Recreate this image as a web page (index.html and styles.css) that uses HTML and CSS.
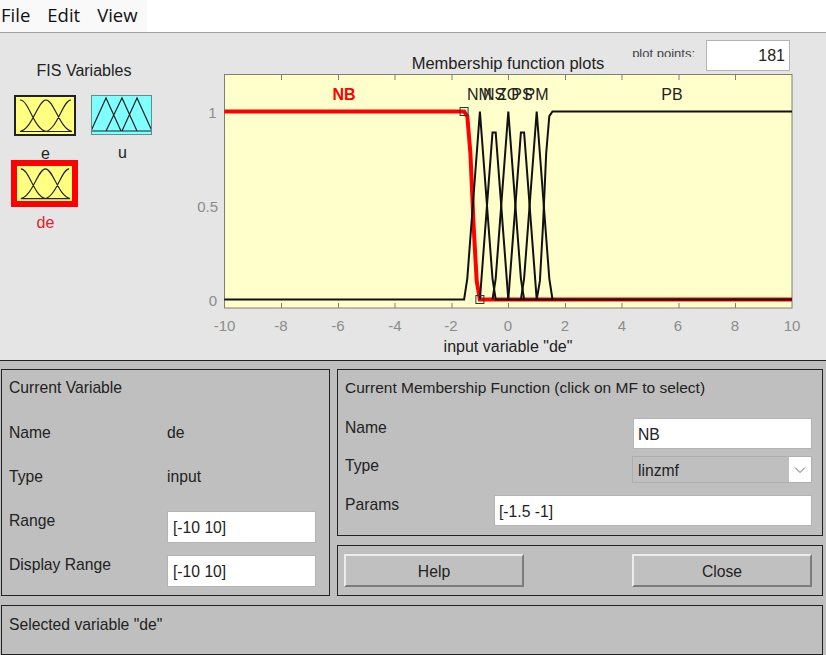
FILE: index.html
```html
<!DOCTYPE html>
<html lang="en">
<head>
  <meta charset="UTF-8">
  <title>Membership Function Editor</title>
  <link rel="stylesheet" href="styles.css">
</head>
<body>

  <header class="menubar">
    <nav class="menu">
      <a>File</a>
      <a>Edit</a>
      <a>View</a>
    </nav>
  </header>

  <svg class="defs" width="0" height="0">
    <symbol id="gauss" viewBox="0 0 58 37" preserveAspectRatio="none">
      <path d="M4 3C13 3 17 31 30 34.500M4 34.500C17 31 22 3 30 3C38 3 43 31 56 34.500M30 34.500C42 31 47 3 55 3M4 34.500H56" fill="none" stroke="#222" stroke-width="1.200"/>
    </symbol>
  </svg>

  <section class="top">
    <div class="fis">
      <div class="fis-title">FIS Variables</div>
      <div class="fis-grid">
        <div class="fis-cell">
          <svg class="var-icon var-input" width="62" height="41"><use href="#gauss" width="58" height="37"/></svg>
          <div class="var-name">e</div>
        </div>
        <div class="fis-cell">
          <svg class="var-icon var-output" width="61" height="40" viewBox="0 0 61 40">
            <path d="M0 36L15 3L30 36M15 36L31 3L46 36M31 36L46 3L61 36M0 36H61" fill="none" stroke="#222" stroke-width="1.200"/>
          </svg>
          <div class="var-name">u</div>
        </div>
        <div class="fis-cell">
          <svg class="var-icon var-selected" width="67" height="47"><use href="#gauss" width="55" height="35"/></svg>
          <div class="var-name var-name-selected">de</div>
        </div>
      </div>
    </div>

    <div class="plot">
      <div class="plot-head">
        <span></span>
        <div class="plot-title">Membership function plots</div>
        <div class="plot-points">
          <span class="points-label">plot points:</span>
          <input class="field points-field" type="text" value="181">
        </div>
      </div>

      <svg class="axes" width="636" height="286" viewBox="0 0 636 286">
        <rect x="34.500" y="0.500" width="567.500" height="233.500" fill="#ffffcc" stroke="#807f70"/>
        <path d="M91.500 1V6M148.500 1V6M205 1V6M262 1V6M318.500 1V6M375.500 1V6M432 1V6M489 1V6M545.500 1V6M91.500 234V229M148.500 234V229M205 234V229M262 234V229M318.500 234V229M375.500 234V229M432 234V229M489 234V229M545.500 234V229" stroke="#807f70" fill="none"/>

        <g class="y-labels">
          <text x="26.500" y="43.500">1</text>
          <text x="28" y="138">0.5</text>
          <text x="27" y="232">0</text>
        </g>
        <g class="x-labels">
          <text x="34.500" y="257">-10</text>
          <text x="91" y="257">-8</text>
          <text x="148" y="257">-6</text>
          <text x="205" y="257">-4</text>
          <text x="261" y="257">-2</text>
          <text x="318" y="257">0</text>
          <text x="375" y="257">2</text>
          <text x="432" y="257">4</text>
          <text x="488" y="257">6</text>
          <text x="545" y="257">8</text>
          <text x="602" y="257">10</text>
        </g>
        <text class="axis-label" x="318" y="278">input variable "de"</text>

        <g transform="translate(34.300 0.500)" fill="none">
          <!-- NB is selected so it sits under the others -->
          <polyline stroke="#f00" stroke-width="4" points="0,37 239.800,37 243,41.700 246.100,78.700 249.300,150.700 252.400,206.400 255.600,225 567.700,225"/>
          <g stroke="#111" stroke-width="2">
            <polyline points="0,225 239.800,225 243,204.100 255.600,37 268.200,204.100 271.400,225 567.700,225"/>
            <polyline points="255.600,225 268.200,57.900 271.400,57.900 284,225"/>
            <polyline points="268.200,225 271.400,204.100 284,37 296.600,204.100 299.800,225"/>
            <polyline points="284,225 296.600,57.900 299.800,57.900 312.400,225"/>
            <polyline points="296.600,225 299.800,204.100 312.400,37 325,204.100 328.200,225"/>
            <polyline points="312.400,225 315.600,206.400 318.700,150.700 321.900,78.700 325,41.700 328.200,37 567.700,37"/>
          </g>
          <rect class="handle" x="235.800" y="33" width="8" height="8"/>
          <rect class="handle" x="251.600" y="221" width="8" height="8"/>
        </g>

        <g class="mf-labels">
          <text class="mf-selected" x="154" y="25.500">NB</text>
          <text x="289.500" y="25.500">NM</text>
          <text x="304" y="25.500">NS</text>
          <text x="318" y="25.500">ZO</text>
          <text x="332" y="25.500">PS</text>
          <text x="346.500" y="25.500">PM</text>
          <text x="482" y="25.500">PB</text>
        </g>
      </svg>
    </div>
  </section>

  <main class="bottom">
    <div class="panel panel-var">
      <div class="var-title">Current Variable</div>
      <div>Name</div><div>de</div>
      <div>Type</div><div>input</div>
      <div>Range</div><input class="field" type="text" value="[-10 10]">
      <div>Display Range</div><input class="field" type="text" value="[-10 10]">
    </div>

    <div class="panel panel-mf">
      <div class="mf-title">Current Membership Function (click on MF to select)</div>
      <div class="mf-row">
        <div>Name</div>
        <input class="field field-short" type="text" value="NB">
      </div>
      <div class="mf-row mf-row-type">
        <div>Type</div>
        <div class="dropdown">
          <span class="dropdown-value">linzmf</span>
          <span class="dropdown-arrow">
            <svg width="12" height="8" viewBox="0 0 12 8"><path d="M1 1.500L6 6.500L11 1.500" fill="none" stroke="#666"/></svg>
          </span>
        </div>
      </div>
      <div class="mf-row mf-row-params">
        <div>Params</div>
        <input class="field field-long" type="text" value="[-1.5 -1]">
      </div>
    </div>

    <div class="panel panel-buttons">
      <button>Help</button>
      <button>Close</button>
    </div>

    <div class="panel panel-status">Selected variable "de"</div>
  </main>

</body>
</html>
```

FILE: styles.css
```css
body {
  font-family: "Liberation Sans", Arial, sans-serif;
  font-size: 15.7px;
  color: #222;
  background-color: #bfbfbf;
  margin: 0;
  padding: 0;
  width: 826px;
  height: 655px;
  overflow: hidden;
}

.defs {
  position: absolute;
}

/* menu */
.menubar {
  height: 32px;
  background-color: white;
  border-bottom: 1px solid #a0a0a0;
}

.menu {
  width: 146px;
  height: 32px;
  padding-left: 1px;
  display: flex;
  gap: 17px;
  background-color: #f9f9f9;
  font-family: "Open Sans", sans-serif;
  font-size: 18.500px;
  line-height: 30px;
  color: #111;
}

/* upper part */
.top {
  height: 327px;
  display: flex;
  background-color: #e5e5e5;
  border-bottom: 1px solid #222;
}

.fis {
  width: 190px;
  padding-top: 28px;
  box-sizing: border-box;
}

.fis-title {
  width: 168px;
  height: 20px;
  line-height: 20px;
  margin-bottom: 14px;
  text-align: center;
  font-size: 16px;
}

.fis-grid {
  display: grid;
  grid-template-columns: 69px 69px;
  grid-auto-rows: 65px;
  column-gap: 8px;
  padding-left: 10px;
}

.fis-cell {
  display: flex;
  flex-direction: column;
  align-items: center;
}

.var-icon {
  display: block;
  flex-shrink: 0;
  box-sizing: border-box;
}

.var-input {
  background-color: #ffff80;
  border: 2px solid #222;
}

.var-output {
  background-color: #80ffff;
  outline: 1px solid #5f8f90;
  outline-offset: -1px;
}

.var-selected {
  background-color: #ffff80;
  border: 6px solid #f00;
}

.var-name {
  margin-top: 12px;
  margin-left: 2px;
  line-height: 12px;
  font-size: 16px;
}

.var-name-selected {
  margin-top: 10px;
  color: #e0202a;
}

.plot {
  width: 636px;
  padding-top: 7px;
}

.plot-head {
  height: 34px;
  margin: 0 34px;
  display: grid;
  grid-template-columns: 1fr auto 1fr;
}

.plot-title {
  margin-top: 13px;
  line-height: 20px;
  font-size: 16.500px;
  white-space: nowrap;
}

.plot-points {
  display: flex;
  justify-content: flex-end;
  gap: 11px;
  padding-right: 2px;
}

.points-label {
  margin-top: 5px;
  height: 12px;
  overflow: hidden;
  font-size: 13px;
  line-height: 18px;
  white-space: nowrap;
  color: #444;
}

.axes {
  display: block;
  font-family: "Liberation Sans", Arial, sans-serif;
}

.y-labels text {
  font-size: 15px;
  fill: #8c8c8c;
  text-anchor: end;
}

.x-labels text {
  font-size: 15px;
  fill: #8c8c8c;
  text-anchor: middle;
}

.axis-label {
  font-size: 16px;
  fill: #222;
  text-anchor: middle;
}

.mf-labels text {
  font-size: 16px;
  fill: #222;
  text-anchor: middle;
}

.mf-labels .mf-selected {
  fill: #f00;
  font-weight: bold;
}

.handle {
  stroke: #333;
  stroke-width: 1;
  fill: none;
}

/* lower part */
.bottom {
  display: grid;
  grid-template-columns: 329px 486px;
  grid-template-rows: 167px 51px 50px;
  column-gap: 7px;
  row-gap: 9px;
  padding: 8px 0 0 1px;
}

.panel {
  border: 1px solid #222;
  box-sizing: border-box;
}

.field {
  display: block;
  box-sizing: border-box;
  background-color: white;
  border: 1px solid #b4b4b4;
  border-radius: 0;
  margin: 0;
  font-family: "Liberation Sans", Arial, sans-serif;
  font-size: 15.700px;
  color: #222;
  outline: none;
}

.points-field {
  width: 84px;
  height: 31px;
  padding: 0 4px 0 0;
  text-align: right;
  font-size: 16px;
}

.panel-var {
  grid-row: 1 / 3;
  display: grid;
  grid-template-columns: 158px 149px;
  grid-template-rows: 45px;
  grid-auto-rows: 44px;
  padding: 8px 0 0 7px;
  line-height: 20px;
}

.var-title {
  grid-column: 1 / 3;
}

.panel-var .field {
  width: 149px;
  height: 32px;
  padding: 2px 0 0 5px;
}

.panel-mf {
  padding: 8px 10px 0 7px;
  line-height: 20px;
}

.mf-title {
  margin-bottom: 20px;
  font-size: 15.500px;
}

.mf-row {
  display: flex;
  justify-content: space-between;
  height: 38px;
}

.mf-row-type {
  height: 39px;
}

.field-short {
  width: 179px;
  height: 31px;
  padding: 2px 0 0 4px;
}

.field-long {
  width: 318px;
  height: 31px;
  padding: 2px 0 0 4px;
}

.dropdown {
  width: 180px;
  height: 27px;
  box-sizing: border-box;
  display: flex;
  justify-content: space-between;
  border: 1px solid #aeaeae;
}

.dropdown-value {
  padding: 4px 0 0 5px;
}

.dropdown-arrow {
  width: 22px;
  display: flex;
  align-items: center;
  justify-content: center;
  background-color: white;
}

.panel-buttons {
  grid-column: 2;
  display: flex;
  justify-content: space-between;
  padding: 8px 10px 0 6px;
}

button {
  width: 180px;
  height: 33px;
  box-sizing: border-box;
  padding: 2px 0 0;
  background-color: #c0c0c0;
  border: 2px solid;
  border-color: #ececec #7c7c7c #7c7c7c #ececec;
  font-family: "Liberation Sans", Arial, sans-serif;
  font-size: 15.700px;
  color: #222;
}

.panel-status {
  grid-column: 1 / 3;
  padding: 9px 7px 0;
  line-height: 20px;
}
```
